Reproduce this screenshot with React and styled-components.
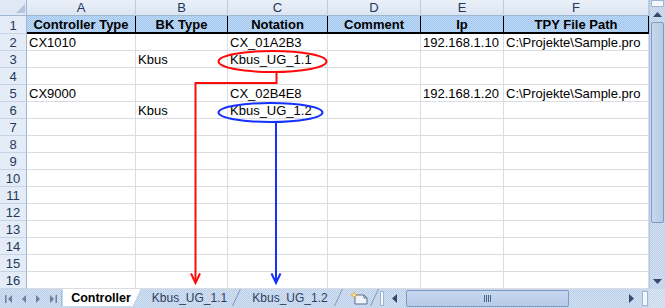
import styled, { createGlobalStyle } from "styled-components";

const GlobalStyle = createGlobalStyle`
  html, body { margin: 0; padding: 0; background: #fff; }
  body { font-family: "Liberation Sans", Arial, sans-serif; }
`;

const columns = [
  { letter: "A", width: 109, title: "Controller Type" },
  { letter: "B", width: 92, title: "BK Type" },
  { letter: "C", width: 100, title: "Notation" },
  { letter: "D", width: 93, title: "Comment" },
  { letter: "E", width: 83, title: "Ip" },
  { letter: "F", width: 145, title: "TPY File Path" },
];

const rows = {
  2: ["CX1010", "", "CX_01A2B3", "", "192.168.1.10", "C:\\Projekte\\Sample.pro"],
  3: ["", "Kbus", "Kbus_UG_1.1", "", "", ""],
  5: ["CX9000", "", "CX_02B4E8", "", "192.168.1.20", "C:\\Projekte\\Sample.pro"],
  6: ["", "Kbus", "Kbus_UG_1.2", "", "", ""],
};

const trackPattern = `
  background-color: #c8d8ee;
  background-image: repeating-conic-gradient(#bccfe9 0 25%, #d3e1f3 0 50%);
  background-size: 2px 2px;
`;

export default function App() {
  const rowNumbers = Array.from({ length: 15 }, (_, i) => i + 2);
  return (
    <Page>
      <GlobalStyle />
      <Workspace>
        <SheetArea>
          <Grid>
            <Corner />
            {columns.map((c) => (
              <ColHeader key={c.letter}>{c.letter}</ColHeader>
            ))}
            <RowHeader>1</RowHeader>
            {columns.map((c) => (
              <TitleCell key={c.letter}>{c.title}</TitleCell>
            ))}
            {rowNumbers.map((n) => (
              <Row key={n} n={n} values={rows[n] || []} />
            ))}
          </Grid>
          <Overlay width="649" height="289" viewBox="0 0 649 289">
            <ellipse cx="272.5" cy="61.5" rx="54" ry="10.5" fill="none" stroke="#ff0a0a" strokeWidth="2" />
            <polyline points="276.5,72 276.5,83 195.5,83 195.5,281" fill="none" stroke="#ff0a0a" strokeWidth="2" />
            <polyline points="191,273.5 195.5,283 200,273.5" fill="none" stroke="#ff0a0a" strokeWidth="2" />
            <ellipse cx="270.5" cy="112.5" rx="52" ry="9.5" fill="none" stroke="#1430ff" strokeWidth="2" />
            <line x1="276" y1="122" x2="276" y2="281" stroke="#1430ff" strokeWidth="2" />
            <polyline points="271.5,273.5 276,283 280.5,273.5" fill="none" stroke="#1430ff" strokeWidth="2" />
          </Overlay>
        </SheetArea>
        <VScroll>
          <SplitBox vertical />
          <ArrowButton vertical>
            <svg width="9" height="5" viewBox="0 0 9 5"><path d="M0 5 L4.5 0 L9 5 Z" fill="#34496b" /></svg>
          </ArrowButton>
          <VThumb />
          <Track />
          <ArrowButton vertical>
            <svg width="9" height="5" viewBox="0 0 9 5"><path d="M0 0 L4.5 5 L9 0 Z" fill="#34496b" /></svg>
          </ArrowButton>
        </VScroll>
      </Workspace>
      <TabBar>
        <NavButtons>
          <NavButton>
            <svg width="7" height="8" viewBox="0 0 7 8"><rect x="0" y="0" width="1.5" height="8" fill="#6d7f9c" /><path d="M7 0 L3 4 L7 8 Z" fill="#6d7f9c" /></svg>
          </NavButton>
          <NavButton>
            <svg width="5" height="8" viewBox="0 0 5 8"><path d="M5 0 L1 4 L5 8 Z" fill="#6d7f9c" /></svg>
          </NavButton>
          <NavButton>
            <svg width="5" height="8" viewBox="0 0 5 8"><path d="M0 0 L4 4 L0 8 Z" fill="#6d7f9c" /></svg>
          </NavButton>
          <NavButton>
            <svg width="7" height="8" viewBox="0 0 7 8"><path d="M0 0 L4 4 L0 8 Z" fill="#6d7f9c" /><rect x="5.5" y="0" width="1.5" height="8" fill="#6d7f9c" /></svg>
          </NavButton>
        </NavButtons>
        <Tabs>
          <SheetTab active width={78}>Controller</SheetTab>
          <SheetTab width={99}>Kbus_UG_1.1</SheetTab>
          <SheetTab width={102}>Kbus_UG_1.2</SheetTab>
          <SheetTab width={36}>
            <svg width="20" height="14" viewBox="0 0 20 14">
              <path d="M6 4 H15 L18 7 V13 H6 Z" fill="#eef3fa" stroke="#5b6f90" strokeWidth="1" />
              <path d="M15 4 V7 H18" fill="none" stroke="#5b6f90" strokeWidth="1" />
              <path d="M5 0 L6 3 L9 4 L6 5 L5 8 L4 5 L1 4 L4 3 Z" fill="#f2a31b" />
              <circle cx="5" cy="4" r="1.3" fill="#fff4b0" />
            </svg>
          </SheetTab>
        </Tabs>
        <Splitter />
        <HScroll>
          <ArrowButton>
            <svg width="5" height="9" viewBox="0 0 5 9"><path d="M5 0 L0 4.5 L5 9 Z" fill="#34496b" /></svg>
          </ArrowButton>
          <HThumb>
            <Grip>
              <span /><span /><span /><span />
            </Grip>
          </HThumb>
          <Track />
          <ArrowButton>
            <svg width="5" height="9" viewBox="0 0 5 9"><path d="M0 0 L5 4.5 L0 9 Z" fill="#34496b" /></svg>
          </ArrowButton>
          <SplitBox />
        </HScroll>
        <ScrollCorner />
      </TabBar>
    </Page>
  );
}

function Row({ n, values }) {
  return (
    <>
      <RowHeader>{n}</RowHeader>
      {columns.map((c, i) => (
        <Cell key={c.letter}>{values[i] || ""}</Cell>
      ))}
    </>
  );
}

const Page = styled.div`
  width: 665px;
  height: 308px;
  display: flex;
  flex-direction: column;
  overflow: hidden;
  background: #fff;
`;

const Workspace = styled.div`
  display: flex;
  height: 289px;
`;

const SheetArea = styled.div`
  position: relative;
  width: 649px;
  height: 289px;
  overflow: hidden;
`;

const Grid = styled.div`
  display: grid;
  grid-template-columns: 27px ${columns.map((c) => c.width + "px").join(" ")};
  grid-template-rows: 16px 18px repeat(15, 17px);
  font-family: "Liberation Sans", Arial, sans-serif;
  font-size: 13px;
  line-height: 15px;
  color: #000;
`;

const Corner = styled.div`
  position: relative;
  background: #dfe8f4;
  border-right: 1px solid #9eb6ce;
  border-bottom: 1px solid #9eb6ce;
  &::after {
    content: "";
    position: absolute;
    right: 1px;
    bottom: 2px;
    border-style: solid;
    border-width: 0 0 9px 9px;
    border-color: transparent transparent #b4c5db transparent;
  }
`;

const ColHeader = styled.div`
  display: flex;
  align-items: center;
  justify-content: center;
  background: linear-gradient(#eaf0f8, #dbe5f2);
  border-right: 1px solid #bccbdd;
  border-bottom: 1px solid #9eb6ce;
  color: #22395b;
`;

const RowHeader = styled.div`
  display: flex;
  align-items: flex-end;
  justify-content: center;
  background: #e4ecf7;
  border-right: 1px solid #9eb6ce;
  border-bottom: 1px solid #c5d3e3;
  color: #22395b;
`;

const TitleCell = styled.div`
  display: flex;
  align-items: flex-end;
  justify-content: center;
  background-color: #aacdf2;
  background-image: repeating-conic-gradient(#9cc4ef 0 25%, #c4ddf7 0 50%);
  background-size: 2px 2px;
  border-right: 1px solid #000;
  border-bottom: 2px solid #000;
  font-weight: bold;
  white-space: nowrap;
`;

const Cell = styled.div`
  display: flex;
  align-items: flex-end;
  padding-left: 2px;
  border-right: 1px solid #d9dce2;
  border-bottom: 1px solid #d9dce2;
  white-space: nowrap;
`;

const Overlay = styled.svg`
  position: absolute;
  left: 0;
  top: 0;
  pointer-events: none;
`;

const VScroll = styled.div`
  width: 16px;
  height: 289px;
  display: flex;
  flex-direction: column;
  ${trackPattern}
  border-left: 1px solid #b3c6df;
  box-sizing: border-box;
`;

const SplitBox = styled.div`
  flex: none;
  box-sizing: border-box;
  width: ${(p) => (p.vertical ? "auto" : "6px")};
  height: ${(p) => (p.vertical ? "7px" : "auto")};
  margin: ${(p) => (p.vertical ? "0 1px" : "1px 1px 1px 2px")};
  background: #f4f7fb;
  border: 1px solid #9fb4d0;
`;

const ArrowButton = styled.div`
  flex: none;
  display: flex;
  align-items: center;
  justify-content: center;
  width: ${(p) => (p.vertical ? "auto" : "18px")};
  height: ${(p) => (p.vertical ? "15px" : "auto")};
`;

const Track = styled.div`
  flex: 1;
`;

const VThumb = styled.div`
  flex: none;
  height: 201px;
  margin: 0 1px;
  background: linear-gradient(90deg, #c6d8ef, #b6cbe6);
  border: 1px solid #7f9bc2;
  border-radius: 2px;
  box-sizing: border-box;
`;

const TabBar = styled.div`
  display: flex;
  height: 19px;
  ${trackPattern}
  font-family: "Liberation Sans", Arial, sans-serif;
`;

const NavButtons = styled.div`
  display: flex;
  align-items: center;
  width: 62px;
  padding-left: 1px;
  box-sizing: border-box;
  border-right: 1px solid #a6bad5;
  margin: 2px 0;
`;

const NavButton = styled.div`
  width: 15px;
  display: flex;
  justify-content: center;
  align-items: center;
`;

const Tabs = styled.div`
  display: flex;
  width: 315px;
  margin-left: 1px;
`;

const SheetTab = styled.div`
  position: relative;
  flex: none;
  width: ${(p) => p.width}px;
  height: 17px;
  display: flex;
  align-items: center;
  justify-content: center;
  box-sizing: border-box;
  padding-left: 2px;
  padding-right: 4px;
  font-size: ${(p) => (p.active ? "12.5px" : "12px")};
  font-weight: ${(p) => (p.active ? "bold" : "normal")};
  color: ${(p) => (p.active ? "#000" : "#2c3f60")};
  background: ${(p) => (p.active ? "#fff" : "transparent")};
  clip-path: ${(p) =>
    p.active ? "polygon(0 0, 100% 0, calc(100% - 8px) 100%, 0 100%)" : "none"};
  &::after {
    content: "";
    position: absolute;
    right: 3px;
    top: 0;
    bottom: 0;
    width: 1px;
    background: #7f96b8;
    transform: skewX(-25deg);
  }
`;

const Splitter = styled.div`
  width: 4px;
  margin: 2px 1px 2px 2px;
  background: #f4f7fb;
  border: 1px solid #9fb4d0;
  box-sizing: border-box;
`;

const HScroll = styled.div`
  display: flex;
  width: 265px;
  padding: 1px 0;
  box-sizing: border-box;
`;

const HThumb = styled.div`
  flex: none;
  width: 163px;
  margin-left: 3px;
  display: flex;
  align-items: center;
  justify-content: center;
  background: linear-gradient(#c6d8ef, #b6cbe6);
  border: 1px solid #7f9bc2;
  border-radius: 2px;
  box-sizing: border-box;
`;

const Grip = styled.div`
  display: flex;
  gap: 1px;
  span {
    width: 1px;
    height: 7px;
    background: #4e6387;
  }
`;

const ScrollCorner = styled.div`
  width: 16px;
  flex: none;
  background-color: #d2dff0;
  background-image: repeating-conic-gradient(#c7d7ec 0 25%, #dde7f4 0 50%);
  background-size: 2px 2px;
`;
